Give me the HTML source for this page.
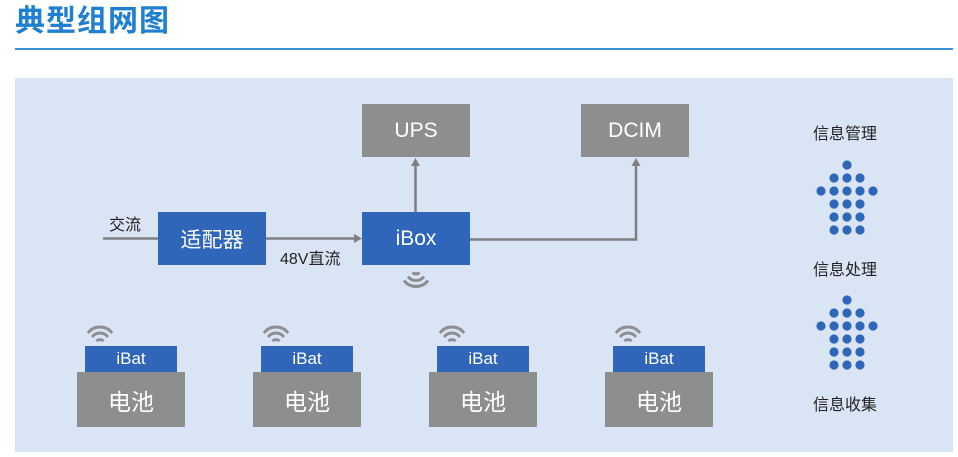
<!DOCTYPE html><html><head><meta charset="utf-8"><style>
body{margin:0;width:958px;height:457px;background:#fff;position:relative;overflow:hidden;font-family:"Liberation Sans","Noto Sans CJK SC",sans-serif}
.a{position:absolute}
.b{position:absolute;background:#2f66b9;color:#fff;display:flex;align-items:center;justify-content:center}
.g{position:absolute;background:#8f8e8f;color:#fff;display:flex;align-items:center;justify-content:center}
.t{position:absolute;font-size:16px;color:#222;white-space:nowrap}
</style></head><body>
<div class="a" style="left:15px;top:2px;font-size:30px;font-weight:bold;color:#1f7fd0;letter-spacing:1px;line-height:40px">典型组网图</div>
<div class="a" style="left:15px;top:48px;width:938px;height:2px;background:#3b8fd9"></div>
<div class="a" style="left:15px;top:78px;width:938px;height:374px;background:#d9e4f5"></div>
<svg class="a" style="left:0;top:0" width="958" height="457">
<g stroke="#7f7f80" stroke-width="2.5" fill="none">
<line x1="103" y1="238.5" x2="158" y2="238.5"/>
<line x1="266" y1="238.5" x2="356" y2="238.5"/>
<line x1="415.5" y1="212" x2="415.5" y2="164"/>
<polyline points="470,239.5 636,239.5 636,164"/>
</g>
<g fill="#7f7f80"><polygon points="362,238.5 354,234 354,243"/><polygon points="415.5,158 411,166 420,166"/><polygon points="636,158 631.5,166 640.5,166"/></g>
<g stroke="#8f8e8f" stroke-width="3" fill="none">
<path d="M412.5,272.5 A5,5 0 0 0 419.5,272.5"/><path d="M408,276.5 A10,10 0 0 0 424,276.5"/><path d="M404,280.5 A15,15 0 0 0 428,280.5"/>
<g id="w"><path d="M96.5,341 A5,5 0 0 1 103.5,341"/><path d="M92,337 A10,10 0 0 1 108,337"/><path d="M88,333 A15,15 0 0 1 112,333"/></g>
<use href="#w" x="176"/><use href="#w" x="352"/><use href="#w" x="528"/>
</g>
<g fill="#2f66b9" id="d">
<circle cx="847" cy="165" r="4.6"/>
<circle cx="834" cy="178" r="4.6"/><circle cx="847" cy="178" r="4.6"/><circle cx="860" cy="178" r="4.6"/>
<circle cx="821" cy="191" r="4.6"/><circle cx="834" cy="191" r="4.6"/><circle cx="847" cy="191" r="4.6"/><circle cx="860" cy="191" r="4.6"/><circle cx="873" cy="191" r="4.6"/>
<circle cx="834" cy="204" r="4.6"/><circle cx="847" cy="204" r="4.6"/><circle cx="860" cy="204" r="4.6"/>
<circle cx="834" cy="217" r="4.6"/><circle cx="847" cy="217" r="4.6"/><circle cx="860" cy="217" r="4.6"/>
<circle cx="834" cy="230" r="4.6"/><circle cx="847" cy="230" r="4.6"/><circle cx="860" cy="230" r="4.6"/>
</g>
<use href="#d" y="135"/>
</svg>
<div class="g" style="left:362px;top:104px;width:108px;height:53px;font-size:21px">UPS</div>
<div class="g" style="left:581px;top:104px;width:108px;height:53px;font-size:21px">DCIM</div>
<div class="b" style="left:158px;top:212px;width:108px;height:53px;font-size:21px">适配器</div>
<div class="b" style="left:362px;top:212px;width:108px;height:53px;font-size:21px">iBox</div>
<div class="t" style="left:109px;top:211px">交流</div>
<div class="t" style="left:280px;top:245px">48V直流</div>
<div class="b" style="left:85px;top:346px;width:92px;height:26px;font-size:17px">iBat</div>
<div class="g" style="left:77px;top:372px;width:108px;height:55px;font-size:23px">电池</div>
<div class="b" style="left:261px;top:346px;width:92px;height:26px;font-size:17px">iBat</div>
<div class="g" style="left:253px;top:372px;width:108px;height:55px;font-size:23px">电池</div>
<div class="b" style="left:437px;top:346px;width:92px;height:26px;font-size:17px">iBat</div>
<div class="g" style="left:429px;top:372px;width:108px;height:55px;font-size:23px">电池</div>
<div class="b" style="left:613px;top:346px;width:92px;height:26px;font-size:17px">iBat</div>
<div class="g" style="left:605px;top:372px;width:108px;height:55px;font-size:23px">电池</div>
<div class="t" style="left:813px;top:120px">信息管理</div>
<div class="t" style="left:813px;top:256px">信息处理</div>
<div class="t" style="left:813px;top:391px">信息收集</div>
</body></html>
